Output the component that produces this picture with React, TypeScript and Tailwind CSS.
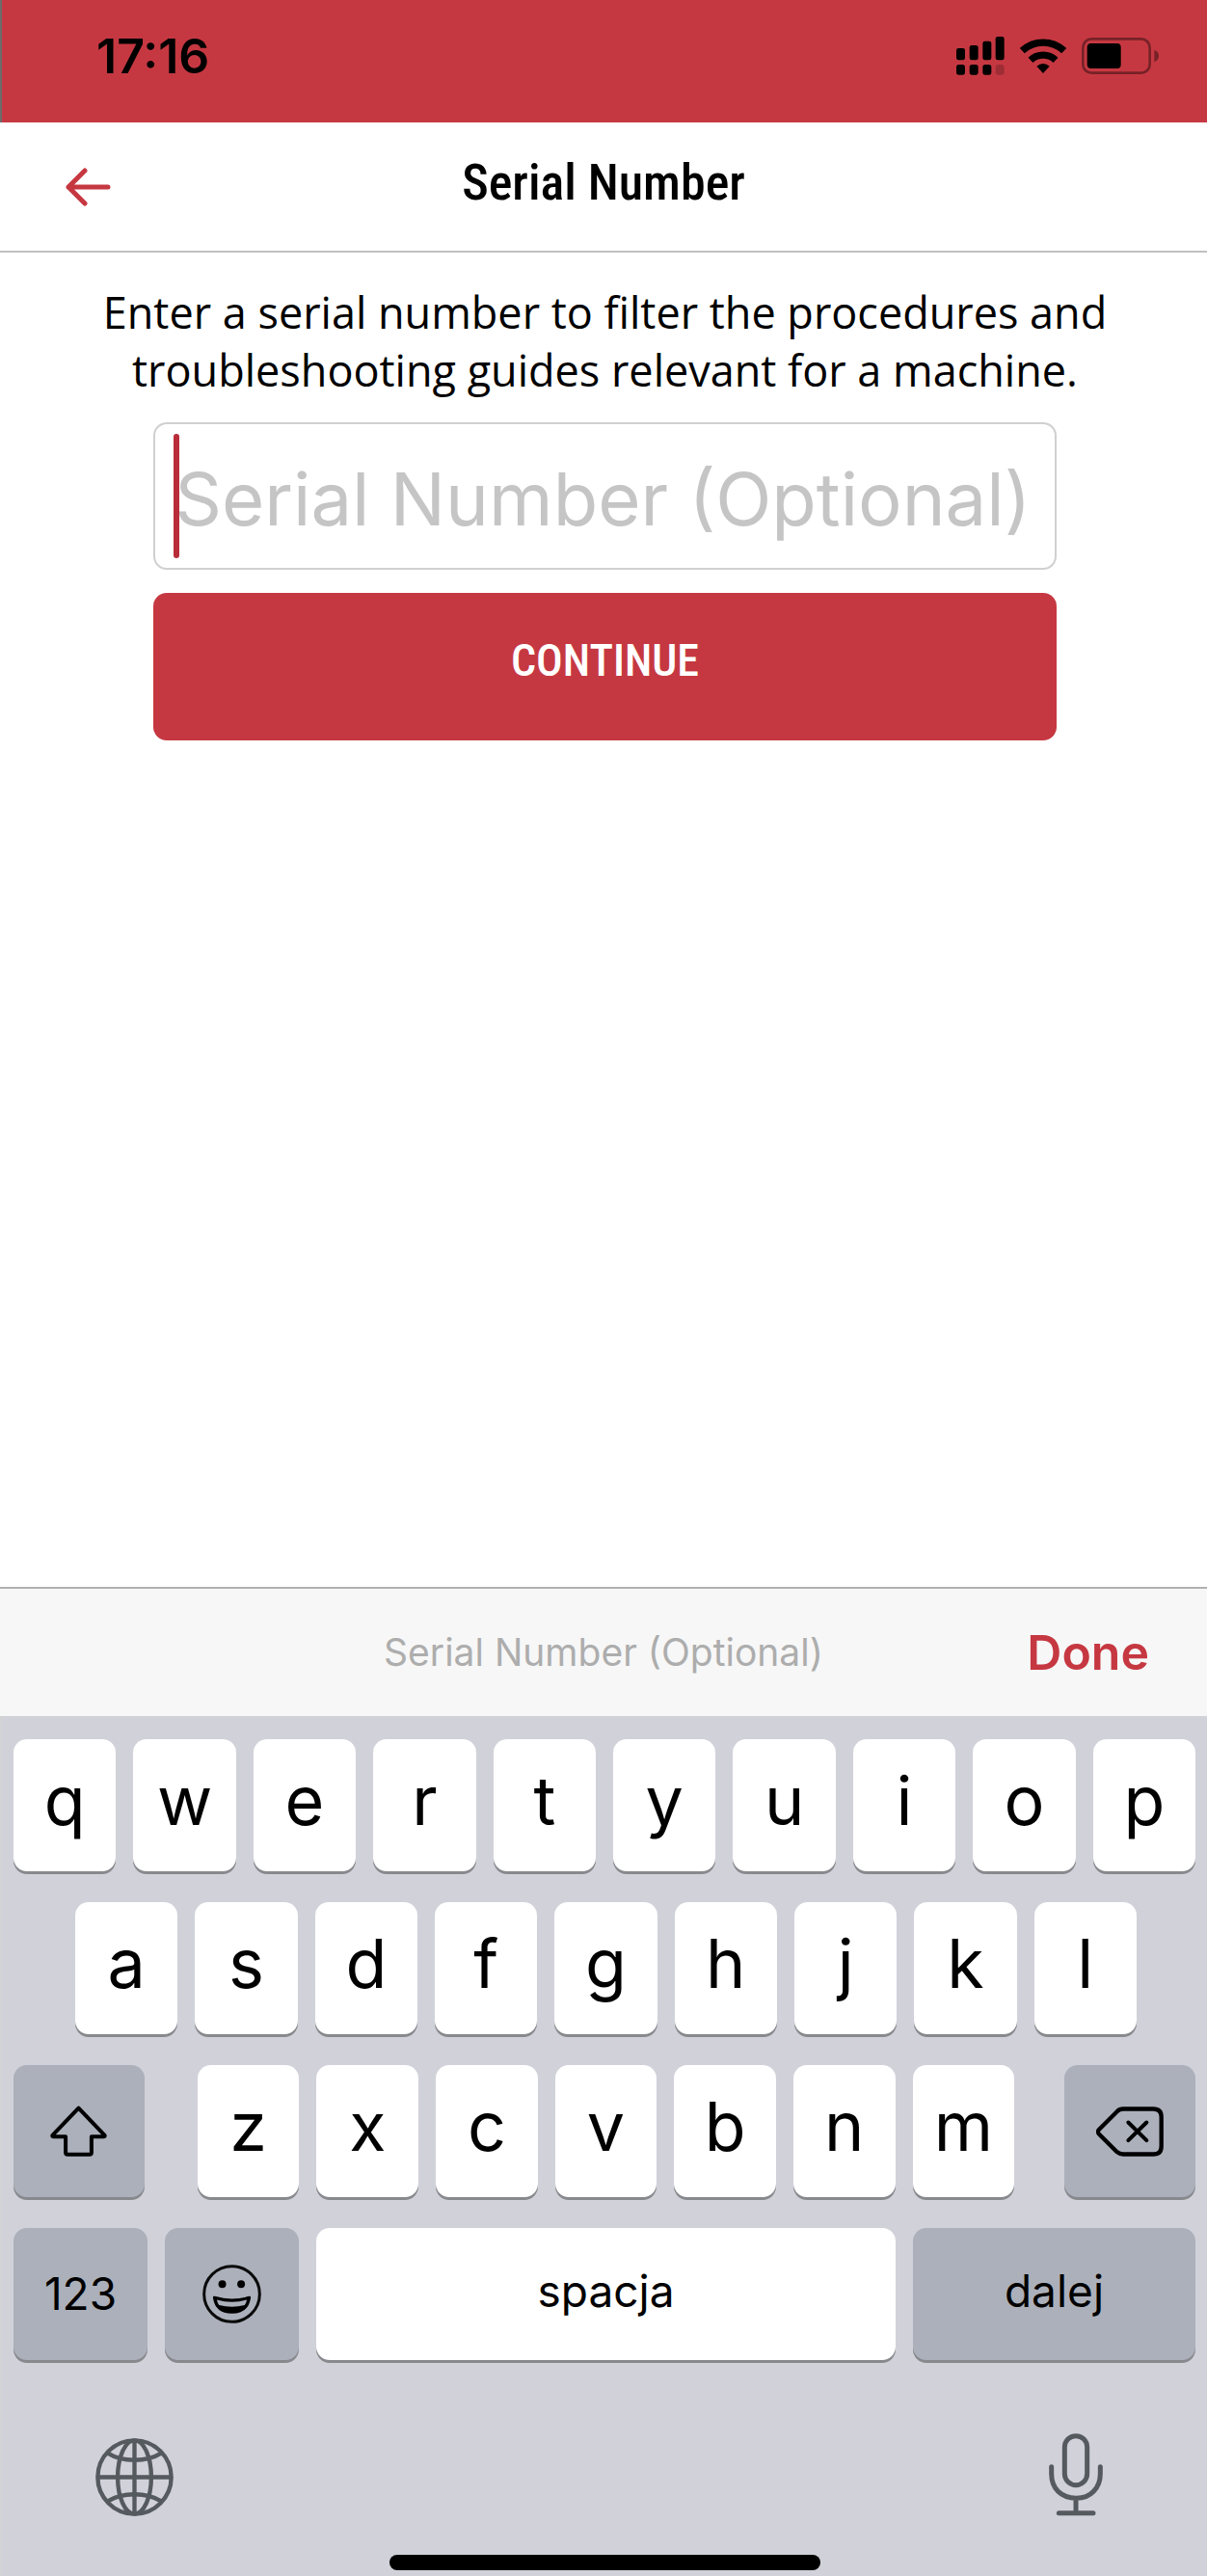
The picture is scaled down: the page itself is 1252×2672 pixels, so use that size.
import type { ReactNode } from "react";

function SignalIcon() {
  return (
    <svg viewBox="0 0 150 120" className="h-10 w-[50px]" aria-hidden="true">
      <rect x="0" y="36" width="27" height="37" rx="7" />
      <rect x="41" y="27" width="27" height="46" rx="7" />
      <rect x="82" y="14" width="27" height="59" rx="7" />
      <rect x="122" y="0" width="27" height="73" rx="7" />
      <rect x="0" y="87" width="27" height="32" rx="8" />
      <rect x="41" y="87" width="27" height="32" rx="8" />
      <rect x="82" y="87" width="27" height="32" rx="8" />
      <rect x="122" y="87" width="27" height="32" rx="8" opacity="0.2" />
    </svg>
  );
}

function WifiIcon() {
  return (
    <svg viewBox="0 0 144 114" className="h-[38px] w-12" fill="none" stroke="#000" strokeWidth="22" aria-hidden="true">
      <path d="M7 41A95 95 0 0 1 137 41" />
      <path d="M33 70A57 57 0 0 1 111 70" />
      <path d="M52 89A30 30 0 0 1 92 89L72 111Z" fill="#000" stroke="none" />
    </svg>
  );
}

function BatteryIcon() {
  return (
    <svg viewBox="0 0 240 114" className="h-[38px] w-20" aria-hidden="true">
      <rect x="4" y="4" width="208" height="106" rx="27" fill="none" stroke="#000" strokeOpacity="0.4" strokeWidth="8" />
      <rect x="17" y="18" width="105" height="78" rx="12" />
      <path d="M226 38Q240 44 240 57T226 76Z" opacity="0.4" />
    </svg>
  );
}

function BackIcon() {
  return (
    <svg viewBox="0 0 47 40" className="h-10 w-[47px]" fill="none" stroke="#c63841" strokeWidth="5" strokeLinecap="round" strokeLinejoin="round" aria-hidden="true">
      <path d="M44 20H3M20 3L3 20L20 37" />
    </svg>
  );
}

function ShiftIcon() {
  return (
    <svg viewBox="0 0 176 158" className="h-[53px] w-[59px]" fill="none" stroke="#000" strokeWidth="12" strokeLinejoin="round" aria-hidden="true">
      <path d="M88 8L8 91Q5 96 10 96H48V145Q48 151 54 151H122Q128 151 128 145V96H166Q171 96 168 91Z" />
    </svg>
  );
}

function DeleteIcon() {
  return (
    <svg viewBox="0 0 210 155" className="h-[52px] w-[70px]" fill="none" stroke="#000" strokeWidth="13" strokeLinecap="round" strokeLinejoin="round" aria-hidden="true">
      <path d="M8 72L65 15Q73 7 84 7H178Q203 7 203 32V123Q203 148 178 148H84Q73 148 65 141L8 84Q4 78 8 72Z" />
      <path d="M100 49L157 105M157 49L100 105" strokeWidth="12" />
    </svg>
  );
}

function EmojiIcon() {
  return (
    <svg viewBox="0 0 184 184" className="size-[61px]" aria-hidden="true">
      <circle cx="92" cy="92" r="87" fill="none" stroke="#0a0a0a" strokeWidth="9" />
      <circle cx="62" cy="61" r="12" />
      <circle cx="121" cy="61" r="12" />
      <path d="M33 104Q32 97 39 99Q92 115 145 99Q152 97 151 104Q144 153 92 153Q40 153 33 104Z" />
      <path d="M45 110Q92 124 139 110Q137 120 132 127Q92 137 52 127Q47 120 45 110Z" fill="#abb0bb" />
    </svg>
  );
}

function GlobeIcon() {
  return (
    <svg viewBox="0 0 242 242" className="size-[81px]" fill="none" stroke="#555a5f" strokeWidth="13" aria-hidden="true">
      <circle cx="121" cy="121" r="114" />
      <ellipse cx="121" cy="121" rx="52" ry="114" />
      <path d="M121 7V235M7 121H235" />
      <path d="M37 46Q72 68 121 68T205 46M37 196Q72 174 121 174T205 196" />
    </svg>
  );
}

function MicIcon() {
  return (
    <svg viewBox="0 0 168 258" className="h-[86px] w-14" fill="none" stroke="#555a5f" strokeWidth="15" strokeLinecap="round" aria-hidden="true">
      <rect x="49" y="8" width="70" height="153" rx="35" />
      <path d="M8 104V126Q8 161 29 181T84 202T139 181T160 126V104M84 202V248M31 248H138" />
    </svg>
  );
}

type KeyProps = { tone?: "light" | "dark"; size: string; label?: string; children: ReactNode };

function Key({ tone = "light", size, label, children }: KeyProps) {
  const bg = tone === "light" ? "bg-white" : "bg-[#abb0bb]";
  return (
    <button
      type="button"
      aria-label={label}
      className={`flex h-[137px] min-w-0 basis-0 items-center justify-center rounded-[14px] shadow-[0_3px_0_#88898d] ${bg} ${size}`}
    >
      {children}
    </button>
  );
}

function Letters({ keys }: { keys: string }) {
  return keys.split("").map((k) => (
    <Key key={k} size="grow pb-2.5 text-[70px] leading-none">
      {k}
    </Key>
  ));
}

export default function App() {
  return (
    <div className="flex min-h-screen flex-col bg-white font-['Inter',sans-serif] text-black">
      <div className="flex h-[127px] items-center justify-between border-l-2 border-[#6b6b6b] bg-[#c63841] pr-[50px] pb-3 pl-[98px]">
        <span className="text-[50px] leading-none font-semibold">17:16</span>
        <div className="flex items-center gap-4">
          <SignalIcon />
          <WifiIcon />
          <BatteryIcon />
        </div>
      </div>

      <header className="grid h-[135px] grid-cols-[1fr_auto_1fr] items-center border-b-2 border-[#c0c0c0] px-[68px]">
        <button type="button" aria-label="Back" className="w-fit">
          <BackIcon />
        </button>
        <h1 className="pb-2 font-['Roboto_Condensed','Roboto',sans-serif] text-[52px] font-medium">Serial Number</h1>
      </header>

      <main className="flex-1 pt-8 pl-[3px]">
        <p className="px-20 text-center font-['Open_Sans',sans-serif] text-[45px] leading-[60px]">
          Enter a serial number to filter the procedures and troubleshooting guides relevant for a machine.
        </p>
        <form className="mx-auto mt-6 flex w-3/4 flex-col gap-6" onSubmit={(e) => e.preventDefault()}>
          <div className="relative">
            <input
              type="text"
              aria-label="Serial Number (Optional)"
              placeholder="Serial Number (Optional)"
              className="h-[153px] w-full rounded-[14px] border-2 border-[#d0d0d0] bg-white pt-1 pl-5 text-[76px] outline-none placeholder:text-[#c5c5c5]"
            />
            <span className="absolute inset-y-3 left-[21px] w-1.5 rounded-full bg-[#b92c39]" />
          </div>
          <button
            type="submit"
            className="h-[153px] rounded-[14px] bg-[#c63841] pb-3 font-['Roboto_Condensed','Roboto',sans-serif] text-[46px] font-medium text-white"
          >
            CONTINUE
          </button>
        </form>
      </main>

      <div className="grid h-[134px] grid-cols-[1fr_auto_1fr] items-center border-t-2 border-[#b0b0b0] bg-[#f7f7f7] px-[60px]">
        <span className="col-start-2 text-[39px] text-[#adadad]">Serial Number (Optional)</span>
        <button type="button" className="justify-self-end text-[50px] leading-none font-semibold text-[#c63841]">
          Done
        </button>
      </div>

      <div className="flex flex-col gap-8 border-l-2 border-[#d3d3d5] bg-[#d1d1da] pt-6 pr-3 pb-1.5 pl-3">
        <div className="flex gap-[18px]">
          <Letters keys="qwertyuiop" />
        </div>
        <div className="flex gap-[18px] pr-[61px] pl-16">
          <Letters keys="asdfghjkl" />
        </div>
        <div className="flex justify-between">
          <Key tone="dark" size="grow-[136]" label="Shift">
            <ShiftIcon />
          </Key>
          <div className="mr-[52px] ml-[55px] flex min-w-0 grow-[848] basis-0 gap-[18px]">
            <Letters keys="zxcvbnm" />
          </div>
          <Key tone="dark" size="grow-[136]" label="Delete">
            <DeleteIcon />
          </Key>
        </div>
        <div className="flex gap-[18px]">
          <Key tone="dark" size="grow-[139] text-[46px]">
            123
          </Key>
          <Key tone="dark" size="grow-[139]" label="Emoji">
            <EmojiIcon />
          </Key>
          <Key size="grow-[601] pb-1.5 text-[46px]">spacja</Key>
          <Key tone="dark" size="grow-[293] pb-1.5 text-[46px]">
            dalej
          </Key>
        </div>
        <div className="mt-11 flex items-end justify-between pr-24 pl-[85px]">
          <button type="button" aria-label="Next keyboard">
            <GlobeIcon />
          </button>
          <button type="button" aria-label="Dictate">
            <MicIcon />
          </button>
        </div>
        <div className="mx-auto mt-2 h-4 w-[447px] rounded-full bg-black" />
      </div>
    </div>
  );
}
